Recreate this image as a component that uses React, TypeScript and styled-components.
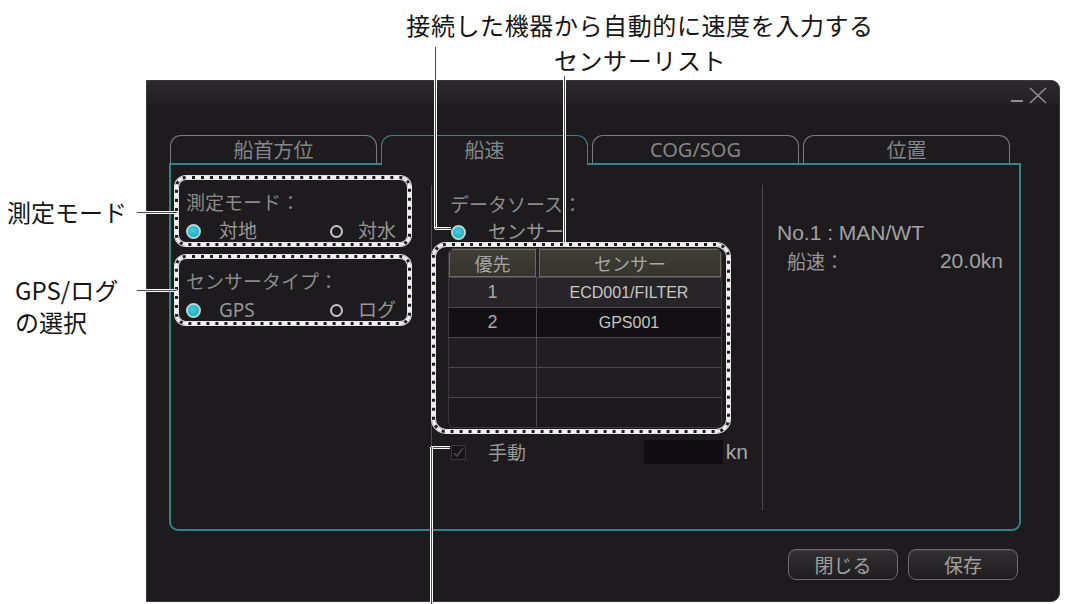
import React from "react";
import styled, { createGlobalStyle, css } from "styled-components";

const GlobalStyle = createGlobalStyle`
  html, body {
    margin: 0;
    padding: 0;
    background: #fff;
  }
  body {
    font-family: "Noto Sans", "Noto Sans CJK JP", sans-serif;
  }
`;

const Page = styled.div`
  position: relative;
  width: 1065px;
  height: 604px;
  overflow: hidden;
  background: #fff;
`;

const Caption = styled.div`
  height: 80px;
  box-sizing: border-box;
  padding: 7px 0 0 215px;
  text-align: center;
  font-family: "Noto Sans CJK JP", sans-serif;
  font-size: 24px;
  letter-spacing: 0.6px;
  line-height: 35px;
  color: #151515;
`;

const MainRow = styled.div`
  display: flex;
`;

const Notes = styled.div`
  width: 146px;
  flex-shrink: 0;
  font-family: "Noto Sans CJK JP", sans-serif;
  font-size: 24px;
  line-height: 32px;
  color: #151515;
`;

const Note = styled.div<{ $top: number; $indent: number }>`
  margin-top: ${(p) => p.$top}px;
  padding-left: ${(p) => p.$indent}px;
`;

const Dialog = styled.div`
  width: 914px;
  height: 522px;
  box-sizing: border-box;
  background: #1d1b1e;
  border: 1px solid #3a383b;
  border-radius: 0 9px 9px 0;
  display: flex;
  flex-direction: column;
`;

const TitleBar = styled.div`
  height: 23px;
  flex-shrink: 0;
  background: linear-gradient(#2b292c, #232124);
  border-radius: 0 9px 0 0;
  display: flex;
  justify-content: flex-end;
  align-items: flex-end;
  padding-right: 11px;
`;

const Body = styled.div`
  padding: 31px 38px 0 22px;
`;

const TabRow = styled.div`
  display: flex;
  align-items: flex-end;
  gap: 4px;
  padding-left: 1px;
  height: 28px;
`;

const Tab = styled.div<{ $active?: boolean }>`
  width: 207px;
  height: 28px;
  box-sizing: border-box;
  border: 1.5px solid #7b7a7c;
  border-bottom: none;
  border-radius: 11px 11px 0 0;
  display: flex;
  align-items: center;
  justify-content: center;
  font-size: 20px;
  color: #868686;
  ${(p) =>
    p.$active &&
    css`
      height: 30px;
      margin-bottom: -2px;
      padding-bottom: 2px;
      border-color: #34858c;
      background: #1d1b1e;
      position: relative;
      z-index: 1;
    `}
`;

const Panel = styled.div`
  height: 368px;
  box-sizing: border-box;
  border: 2px solid #33828a;
  border-radius: 0 0 9px 9px;
  display: grid;
  grid-template-columns: 260px 332px 1fr;
  align-items: start;
`;

const LeftCol = styled.div`
  padding: 11px 0 0 4px;
  display: flex;
  flex-direction: column;
  gap: 9px;
`;

const annotated = css`
  box-sizing: border-box;
  border: 3px dashed #f2f2f2;
  box-shadow: 0 0 0 1px #e4e4e4, inset 0 0 0 1px #e4e4e4;
`;

const GroupBox = styled.div`
  ${annotated};
  width: 236px;
  height: 70px;
  border-radius: 11px;
  padding: 12px 12px 0 8px;
`;

const GroupLabel = styled.div`
  font-size: 19px;
  line-height: 24px;
  color: #8a8a8a;
  white-space: nowrap;
`;

const RadioRow = styled.div`
  display: flex;
  justify-content: space-between;
  align-items: center;
  height: 24px;
  margin-top: 4px;
`;

const Option = styled.label<{ $gap?: number }>`
  display: flex;
  align-items: center;
  gap: ${(p) => p.$gap ?? 18}px;
  font-size: 19px;
  line-height: 24px;
  color: #969696;
  white-space: nowrap;
`;

const Radio = styled.span<{ $on?: boolean }>`
  box-sizing: border-box;
  flex-shrink: 0;
  border-radius: 50%;
  ${(p) =>
    p.$on
      ? css`
          width: 15px;
          height: 15px;
          background: radial-gradient(circle at 45% 40%, #3fd0e0, #1a9fb1);
          border: 2px solid #b7d4d8;
        `
      : css`
          width: 13px;
          height: 13px;
          margin: 1px;
          border: 2px solid #c6c6c6;
        `}
`;

const MidCol = styled.div`
  margin-top: 20px;
  height: 325px;
  box-sizing: border-box;
  border-left: 1px solid #4a484b;
  border-right: 1px solid #4a484b;
`;

const MidLabel = styled.div`
  padding: 8px 0 0 18px;
  font-size: 19px;
  line-height: 24px;
  color: #8a8a8a;
`;

const MidRadio = styled.div`
  display: flex;
  height: 22px;
  margin-top: 4px;
  padding-left: 19px;
  align-items: center;
`;

const TableBox = styled.div`
  ${annotated};
  width: 298px;
  height: 190px;
  border-radius: 14px;
  padding: 2px 5px 0 13px;
`;

const Table = styled.div`
  border: 1px solid #3b393c;
  border-radius: 6px;
  overflow: hidden;
  font-family: "Liberation Sans", Arial, sans-serif;
`;

const HeadRow = styled.div`
  display: grid;
  grid-template-columns: 87px 1fr;
  gap: 3px;
  height: 28px;
  background: #242225;
`;

const HeadCell = styled.div`
  box-sizing: border-box;
  border: 1px solid #6c6b5d;
  background: linear-gradient(#3f3e37, #34332d);
  display: flex;
  align-items: center;
  justify-content: center;
  font-family: "Noto Sans CJK JP", sans-serif;
  font-size: 18px;
  color: #a6a6a6;
`;

const BodyRow = styled.div<{ $bg: string }>`
  display: grid;
  grid-template-columns: 88px 1fr;
  height: 30px;
  box-sizing: border-box;
  border-top: 1.5px solid #4b494c;
  background: ${(p) => p.$bg};
`;

const Cell = styled.div<{ $first?: boolean }>`
  display: flex;
  align-items: center;
  justify-content: center;
  font-size: 16px;
  color: #c6c6c6;
  ${(p) => p.$first && "border-right: 1.5px solid #4b494c; font-size: 18px; color: #a8a8a8;"}
`;

const ManualRow = styled.div`
  display: flex;
  align-items: center;
  height: 24px;
  margin-top: 7px;
  padding: 0 14px 0 19px;
`;

const CheckBox = styled.span`
  width: 15px;
  height: 15px;
  box-sizing: border-box;
  border: 1px solid #3a383b;
  background: #161416;
  display: flex;
  align-items: center;
  justify-content: center;
`;

const ManualLabel = styled.span`
  margin-left: 22px;
  font-size: 19px;
  color: #969696;
`;

const SpeedInput = styled.span`
  margin-left: auto;
  width: 79px;
  height: 24px;
  background: #0f0d0f;
`;

const Unit = styled.span`
  margin-left: 3px;
  font-family: "Liberation Sans", Arial, sans-serif;
  font-size: 21px;
  color: #a8a8a8;
`;

const RightCol = styled.div`
  padding: 56px 16px 0 14px;
  font-family: "Liberation Sans", "Noto Sans CJK JP", sans-serif;
  font-size: 21px;
  line-height: 24px;
  color: #a2a2a2;
`;

const ValueRow = styled.div`
  display: flex;
  justify-content: space-between;
  margin-top: 4px;
  padding-left: 10px;
`;

const CjkText = styled.span`
  font-family: "Noto Sans CJK JP", sans-serif;
  font-size: 19px;
  color: #969696;
`;

const ButtonRow = styled.div`
  display: flex;
  justify-content: flex-end;
  gap: 10px;
  margin-top: 18px;
  padding-right: 3px;
`;

const Button = styled.button`
  width: 110px;
  height: 31px;
  border: 1.5px solid #6d6b6e;
  border-radius: 8px;
  background: linear-gradient(#323033, #1f1d20);
  box-shadow: inset 0 1px 0 rgba(255, 255, 255, 0.06);
  color: #a0a0a0;
  font-family: "Noto Sans CJK JP", sans-serif;
  font-size: 19px;
  padding: 0;
`;

const Leader = styled.div<{ $x: number; $y: number; $len: number; $vertical?: boolean }>`
  position: absolute;
  z-index: 5;
  background: #4a4a4a;
  ${(p) =>
    p.$vertical
      ? css`
          left: ${p.$x - 1}px;
          top: ${p.$y}px;
          width: 1px;
          height: ${p.$len}px;
          border-left: 1px solid #fff;
          border-right: 1px solid #fff;
        `
      : css`
          left: ${p.$x}px;
          top: ${p.$y - 1}px;
          width: ${p.$len}px;
          height: 1px;
          border-top: 1px solid #fff;
          border-bottom: 1px solid #fff;
        `}
`;

const tabs = ["船首方位", "船速", "COG/SOG", "位置"];

const rows = [
  { no: "1", name: "ECD001/FILTER", bg: "#272528" },
  { no: "2", name: "GPS001", bg: "#121012" },
  { no: "", name: "", bg: "#201e21" },
  { no: "", name: "", bg: "#201e21" },
  { no: "", name: "", bg: "#1b191c" },
];

const leaders = [
  { x: 435, y: 47, len: 182, vertical: true },
  { x: 435, y: 228, len: 16 },
  { x: 564, y: 76, len: 166, vertical: true },
  { x: 431, y: 447, len: 19 },
  { x: 431, y: 447, len: 160, vertical: true },
  { x: 137, y: 212, len: 40 },
  { x: 137, y: 290, len: 40 },
];

const WindowControls = () => (
  <svg width="38" height="19" viewBox="0 0 38 19">
    <line x1="1" y1="16" x2="13" y2="16" stroke="#8e8e8e" strokeWidth="2" />
    <line x1="20" y1="3" x2="36" y2="18" stroke="#8e8e8e" strokeWidth="1.6" />
    <line x1="36" y1="3" x2="20" y2="18" stroke="#8e8e8e" strokeWidth="1.6" />
  </svg>
);

export default function App() {
  return (
    <Page>
      <GlobalStyle />
      <Caption>
        接続した機器から自動的に速度を入力する
        <br />
        センサーリスト
      </Caption>
      <MainRow>
        <Notes>
          <Note $top={116} $indent={7}>
            測定モード
          </Note>
          <Note $top={46} $indent={15}>
            GPS/ログ
            <br />
            の選択
          </Note>
        </Notes>
        <Dialog>
          <TitleBar>
            <WindowControls />
          </TitleBar>
          <Body>
            <TabRow>
              {tabs.map((t) => (
                <Tab key={t} $active={t === "船速"}>
                  {t}
                </Tab>
              ))}
            </TabRow>
            <Panel>
              <LeftCol>
                <GroupBox>
                  <GroupLabel>測定モード：</GroupLabel>
                  <RadioRow>
                    <Option>
                      <Radio $on />
                      対地
                    </Option>
                    <Option $gap={14}>
                      <Radio />
                      対水
                    </Option>
                  </RadioRow>
                </GroupBox>
                <GroupBox>
                  <GroupLabel>センサータイプ：</GroupLabel>
                  <RadioRow>
                    <Option>
                      <Radio $on />
                      GPS
                    </Option>
                    <Option $gap={14}>
                      <Radio />
                      ログ
                    </Option>
                  </RadioRow>
                </GroupBox>
              </LeftCol>

              <MidCol>
                <MidLabel>データソース：</MidLabel>
                <MidRadio>
                  <Option $gap={22}>
                    <Radio $on />
                    センサー
                  </Option>
                </MidRadio>
                <TableBox>
                  <Table>
                    <HeadRow>
                      <HeadCell>優先</HeadCell>
                      <HeadCell>センサー</HeadCell>
                    </HeadRow>
                    {rows.map((r, i) => (
                      <BodyRow key={i} $bg={r.bg}>
                        <Cell $first>{r.no}</Cell>
                        <Cell>{r.name}</Cell>
                      </BodyRow>
                    ))}
                  </Table>
                </TableBox>
                <ManualRow>
                  <CheckBox>
                    <svg width="11" height="11" viewBox="0 0 11 11">
                      <path d="M1 6 L4 9 L10 1" stroke="#4a484b" strokeWidth="1.6" fill="none" />
                    </svg>
                  </CheckBox>
                  <ManualLabel>手動</ManualLabel>
                  <SpeedInput />
                  <Unit>kn</Unit>
                </ManualRow>
              </MidCol>

              <RightCol>
                <div>No.1 : MAN/WT</div>
                <ValueRow>
                  <CjkText>船速：</CjkText>
                  <span>20.0kn</span>
                </ValueRow>
              </RightCol>
            </Panel>
            <ButtonRow>
              <Button>閉じる</Button>
              <Button>保存</Button>
            </ButtonRow>
          </Body>
        </Dialog>
      </MainRow>
      {leaders.map((l, i) => (
        <Leader key={i} $x={l.x} $y={l.y} $len={l.len} $vertical={l.vertical} />
      ))}
    </Page>
  );
}
